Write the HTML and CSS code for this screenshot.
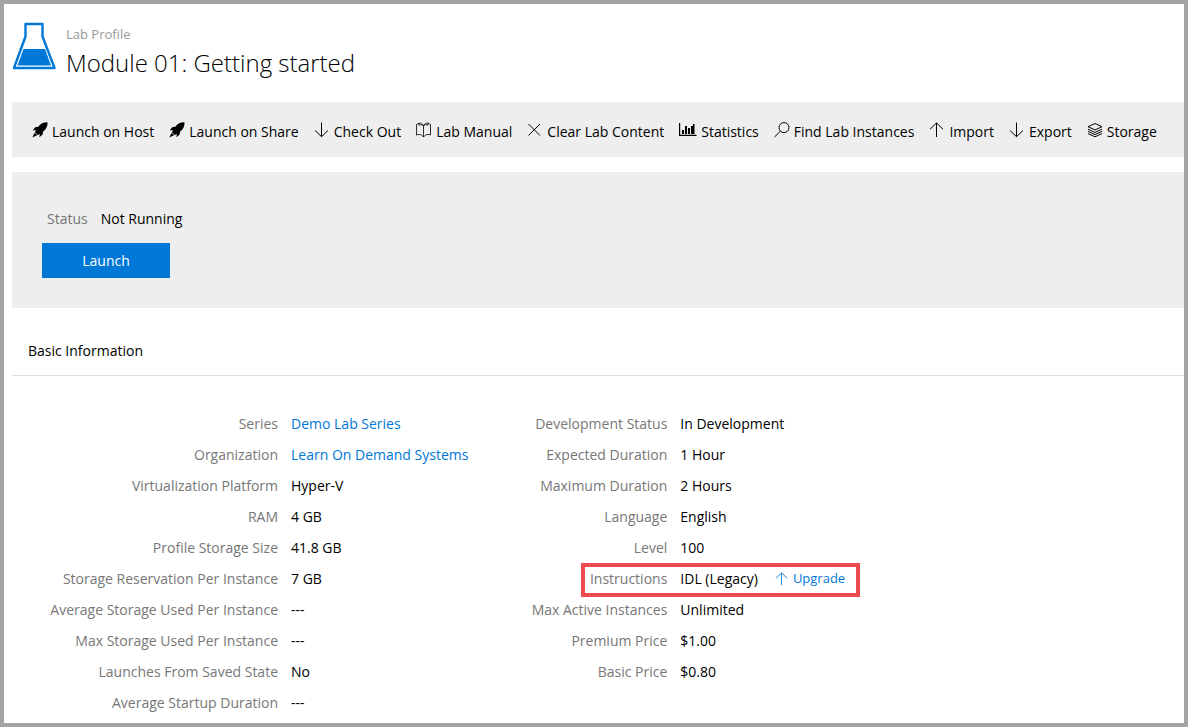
FILE: index.html
```
<!DOCTYPE html>
<html lang="en">
<head>
<meta charset="utf-8">
<meta name="viewport" content="width=device-width, initial-scale=1">
<title>Module 01: Getting started</title>
<link rel="stylesheet" href="styles.css">
</head>
<body>
<svg class="sprite" aria-hidden="true">
  <symbol id="rocket" viewBox="0 0 16 16"><path fill="currentColor" d="M15.500.3C11.500.2 8.600 1.700 6.300 4.700L3.200 5.300.7 8.600l3.200-.5L3 10.200l2.600 2.700 2.300-.9-.6 3.300 3.200-2.500.7-3.200C14.200 7.300 15.700 4.500 15.500.3zM2.700 10.800.3 15.500l4.800-2.300z"/></symbol>
  <symbol id="down" viewBox="0 0 16 16"><path class="line" d="M7.500.5v14M1 8.500l6.500 6.200L14 8.500"/></symbol>
  <symbol id="up" viewBox="0 0 16 16"><path class="line" d="M7.500 15v-14M1 7.200 7.500 1 14 7.200"/></symbol>
  <symbol id="book" viewBox="0 0 16 16"><path class="line thin" d="M7.500 4v11M7.500 4C6.500 2.500 5 2.300 3 3.200V1.200L.5 2.500v10.500l2.500-.6c2 .2 3.500 1 4.500 2.600 1-1.600 2.500-2.400 4.500-2.600l2.500.6V2.500L12 1.200v2C10 2.300 8.500 2.500 7.500 4zM3 1.200c2-.5 3.700.6 4.500 2.800C8.300 1.800 10 .7 12 1.200"/></symbol>
  <symbol id="cross" viewBox="0 0 16 16"><path class="line" d="m1.500 2 11.500 11.500M13 2 1.500 13.500"/></symbol>
  <symbol id="chart" viewBox="0 0 18 16"><path fill="currentColor" d="M0 1h1.200v11.800H17.500V14H0zM3 8h2v4H3zM6 4h2v8H6zM9 6h2v6H9zM12 4h2v8h-2zM14 2h1.500v10H14z"/></symbol>
  <symbol id="search" viewBox="0 0 16 16"><circle class="line" cx="10" cy="5.600" r="5"/><path class="line" d="M6.400 9.200.5 15"/></symbol>
  <symbol id="layers" viewBox="0 0 16 16"><path class="line" d="m8 1.500 7 3.200-7 3.200-7-3.200zM1 7.200l7 3.200 7-3.200M1 9.400l7 3.200 7-3.200M1 11.600l7 3.200 7-3.200"/></symbol>
</svg>

<header class="page-header">
  <svg class="flask" viewBox="0 0 44 48" aria-hidden="true">
    <path fill="none" stroke="#0078d7" stroke-width="2.400" stroke-linejoin="round" d="M13.500 2h17v12.500L42.500 46H2L13.500 14.500z"/>
    <path fill="#0078d7" d="M11.500 27h21.500l6 16.500H5.500z"/>
  </svg>
  <div>
    <p class="kind">Lab Profile</p>
    <h1>Module 01: Getting started</h1>
  </div>
</header>

<nav class="toolbar" aria-label="Lab actions">
  <a href="#"><svg class="icon"><use href="#rocket"/></svg>Launch on Host</a>
  <a href="#"><svg class="icon"><use href="#rocket"/></svg>Launch on Share</a>
  <a href="#"><svg class="icon"><use href="#down"/></svg>Check Out</a>
  <a href="#"><svg class="icon"><use href="#book"/></svg>Lab Manual</a>
  <a href="#"><svg class="icon"><use href="#cross"/></svg>Clear Lab Content</a>
  <a href="#"><svg class="icon wide"><use href="#chart"/></svg>Statistics</a>
  <a href="#"><svg class="icon"><use href="#search"/></svg>Find Lab Instances</a>
  <a href="#"><svg class="icon"><use href="#up"/></svg>Import</a>
  <a href="#"><svg class="icon"><use href="#down"/></svg>Export</a>
  <a href="#"><svg class="icon"><use href="#layers"/></svg>Storage</a>
</nav>

<section class="status-panel">
  <p class="status"><span class="label">Status</span><span>Not Running</span></p>
  <button class="launch" type="button">Launch</button>
</section>

<h2>Basic Information</h2>

<div class="details">
  <dl>
    <div class="row"><dt>Series</dt><dd><a href="#">Demo Lab Series</a></dd></div>
    <div class="row"><dt>Organization</dt><dd><a href="#">Learn On Demand Systems</a></dd></div>
    <div class="row"><dt>Virtualization Platform</dt><dd>Hyper-V</dd></div>
    <div class="row"><dt>RAM</dt><dd>4 GB</dd></div>
    <div class="row"><dt>Profile Storage Size</dt><dd>41.8 GB</dd></div>
    <div class="row"><dt>Storage Reservation Per Instance</dt><dd>7 GB</dd></div>
    <div class="row"><dt>Average Storage Used Per Instance</dt><dd>---</dd></div>
    <div class="row"><dt>Max Storage Used Per Instance</dt><dd>---</dd></div>
    <div class="row"><dt>Launches From Saved State</dt><dd>No</dd></div>
    <div class="row"><dt>Average Startup Duration</dt><dd>---</dd></div>
  </dl>
  <dl>
    <div class="row"><dt>Development Status</dt><dd>In Development</dd></div>
    <div class="row"><dt>Expected Duration</dt><dd>1 Hour</dd></div>
    <div class="row"><dt>Maximum Duration</dt><dd>2 Hours</dd></div>
    <div class="row"><dt>Language</dt><dd>English</dd></div>
    <div class="row"><dt>Level</dt><dd>100</dd></div>
    <div class="row highlight"><dt>Instructions</dt><dd>IDL (Legacy)<a class="upgrade" href="#"><svg class="icon small"><use href="#up"/></svg>Upgrade</a></dd></div>
    <div class="row"><dt>Max Active Instances</dt><dd>Unlimited</dd></div>
    <div class="row"><dt>Premium Price</dt><dd>$1.00</dd></div>
    <div class="row"><dt>Basic Price</dt><dd>$0.80</dd></div>
  </dl>
</div>
</body>
</html>
```
FILE: styles.css
```
* {
  box-sizing: border-box;
}

body {
  margin: 0;
  min-height: 100vh;
  padding-left: 8px;
  border: 4px solid #a5a4a3;
  background: #fff;
  color: #000;
  font: 14px/21px "Open Sans", "Noto Sans", sans-serif;
}

p, h1, h2, dl, dd {
  margin: 0;
}

a {
  color: #0078d7;
  text-decoration: none;
}

.sprite {
  display: none;
}

.line {
  fill: none;
  stroke: currentColor;
  stroke-width: 1;
}

.thin {
  stroke-width: 0.8;
}

.icon {
  flex: none;
  width: 16px;
  height: 16px;
}

.icon.wide {
  width: 18px;
}

.icon.small {
  width: 14px;
  height: 14px;
}

.page-header {
  display: flex;
  gap: 10px;
  height: 98px;
  padding-top: 18px;
}

.flask {
  width: 44px;
  height: 48px;
}

.kind {
  padding-top: 2px;
  color: #999;
  font-size: 13px;
}

h1 {
  font-size: 24px;
  font-weight: 300;
  line-height: 36px;
}

.toolbar {
  display: flex;
  flex-wrap: wrap;
  gap: 8px 15px;
  padding: 19px 20px 15px;
  background: #eee;
}

.toolbar a {
  display: flex;
  gap: 4px;
  color: #000;
  white-space: nowrap;
}

.toolbar .icon {
  margin-top: 1px;
}

.status-panel {
  margin-top: 15px;
  padding: 36px 30px 30px;
  background: #eee;
}

.status {
  display: flex;
  gap: 13px;
  padding-left: 5px;
}

.label, dt {
  color: #777;
}

.launch {
  display: block;
  width: 128px;
  height: 35px;
  margin-top: 14px;
  border: 0;
  background: #0078d7;
  color: #fff;
  font: inherit;
}

h2 {
  margin-top: 32px;
  padding: 0 16px 14px;
  border-bottom: 1px solid #ddd;
  font-size: 14px;
  font-weight: 400;
}

.details {
  display: grid;
  grid-template-columns: repeat(3, minmax(0, 1fr));
  padding: 37px 4px 0 0;
}

.row {
  display: grid;
  grid-template-columns: 266px 1fr;
  column-gap: 13px;
  position: relative;
  padding-bottom: 10px;
  white-space: nowrap;
}

dt {
  text-align: right;
}

dd, .upgrade {
  display: flex;
  align-items: center;
}

.upgrade {
  gap: 4px;
  margin-left: 17px;
  font-size: 13px;
}

.highlight::after {
  content: "";
  position: absolute;
  inset: -5px -69px 2px 180px;
  border: 4px solid #ed4a4d;
  pointer-events: none;
}
```
